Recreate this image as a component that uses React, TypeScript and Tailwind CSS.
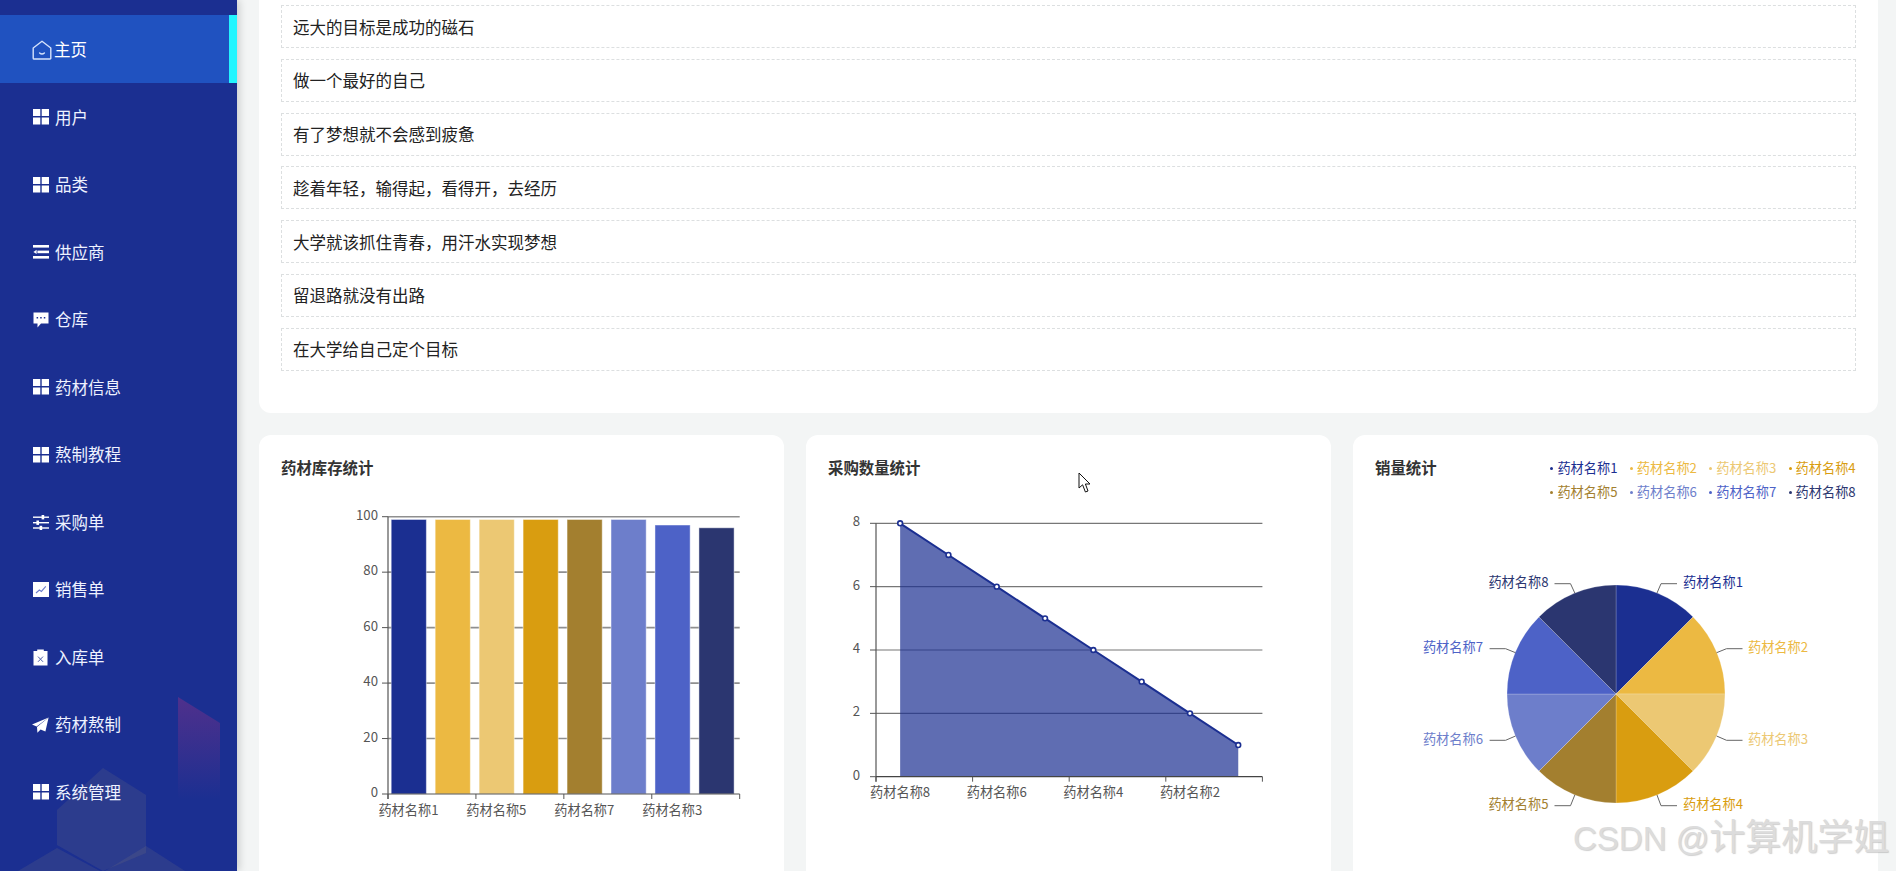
import React from 'react';

const FONT = '"Noto Sans CJK SC", "Noto Sans", sans-serif';
const COLORS = ['#1b2f91', '#ecb942', '#ecc873', '#d99d10', '#a37f2f', '#6d7ecb', '#4d62c7', '#2b3670'];

const quotes = [
  '远大的目标是成功的磁石',
  '做一个最好的自己',
  '有了梦想就不会感到疲惫',
  '趁着年轻，输得起，看得开，去经历',
  '大学就该抓住青春，用汗水实现梦想',
  '留退路就没有出路',
  '在大学给自己定个目标',
];

const GridIcon = () => (
  <svg width="16" height="16" viewBox="0 0 16 16" fill="#fff">
    <rect x="0" y="0" width="7.3" height="7" />
    <rect x="8.7" y="0" width="7.3" height="7" />
    <rect x="0" y="8.5" width="7.3" height="7" />
    <rect x="8.7" y="8.5" width="7.3" height="7" />
  </svg>
);

const HomeIcon = () => (
  <svg width="20" height="20" viewBox="0 0 20 20" fill="none" stroke="#d5e2fb" strokeWidth="1.4" className="-ml-[1px]">
    <path d="M1.2 8 L10 1.2 L18.8 8 V18.2 a0.8 0.8 0 0 1 -0.8 0.8 H2 a0.8 0.8 0 0 1 -0.8 -0.8 Z" strokeLinejoin="round" />
    <path d="M7.6 13 Q10 15 12.4 13" strokeLinecap="round" />
  </svg>
);

const ListIcon = () => (
  <svg width="16" height="14" viewBox="0 0 16 14" fill="#fff">
    <rect x="0" y="0" width="16" height="2.6" />
    <rect x="4.4" y="5.6" width="11.6" height="2.6" />
    <path d="M0.4 6.9 L3.6 4.8 V9 Z" />
    <rect x="0" y="11" width="16" height="2.6" />
  </svg>
);

const ChatIcon = () => (
  <svg width="16" height="16" viewBox="0 0 16 16">
    <path d="M0.5 0.5 H15.5 V11.5 H8 L4.5 15.5 V11.5 H0.5 Z" fill="#fff" />
    <rect x="3.6" y="5" width="1.5" height="1.5" fill="#1b2f91" />
    <rect x="7.2" y="5" width="1.5" height="1.5" fill="#1b2f91" />
    <rect x="10.8" y="5" width="1.5" height="1.5" fill="#1b2f91" />
  </svg>
);

const SlidersIcon = () => (
  <svg width="16" height="15" viewBox="0 0 16 15" fill="#fff">
    <rect x="0" y="1.5" width="16" height="1.4" />
    <rect x="0" y="7" width="16" height="1.4" />
    <rect x="0" y="12.3" width="16" height="1.4" />
    <rect x="8.6" y="0" width="2.6" height="4.4" />
    <rect x="3.4" y="5.5" width="2.6" height="4.4" />
    <rect x="6.6" y="10.8" width="2.6" height="4.4" />
  </svg>
);

const TrendIcon = () => (
  <svg width="16" height="15" viewBox="0 0 16 15">
    <rect x="0" y="0" width="16" height="15" fill="#fff" />
    <path d="M3 11 L6.4 8 L8.4 9.4 L12.8 4.4" fill="none" stroke="#6d7ecb" strokeWidth="1.1" />
  </svg>
);

const ClipboardIcon = () => (
  <svg width="15" height="17" viewBox="0 0 15 17">
    <path d="M0.5 2 H4.2 V0.5 H10.8 V2 H14.5 V16.5 H0.5 Z" fill="#fff" />
    <path d="M5 7.6 L10 12.8 M10 7.6 L5 12.8" stroke="#4d5fa8" strokeWidth="1" />
  </svg>
);

const PlaneIcon = () => (
  <svg width="17" height="16" viewBox="0 0 17 16" fill="#fff" className="-ml-[1px]">
    <path d="M16.6 0.4 L0 7.4 L4.6 9.4 Z" />
    <path d="M16.6 0.4 L5 10 L5.4 15.8 L8.6 12.6 L13.4 14.4 Z" />
  </svg>
);

const menu: { label: string; icon: React.ReactNode; active?: boolean }[] = [
  { label: '主页', icon: <HomeIcon />, active: true },
  { label: '用户', icon: <GridIcon /> },
  { label: '品类', icon: <GridIcon /> },
  { label: '供应商', icon: <ListIcon /> },
  { label: '仓库', icon: <ChatIcon /> },
  { label: '药材信息', icon: <GridIcon /> },
  { label: '熬制教程', icon: <GridIcon /> },
  { label: '采购单', icon: <SlidersIcon /> },
  { label: '销售单', icon: <TrendIcon /> },
  { label: '入库单', icon: <ClipboardIcon /> },
  { label: '药材熬制', icon: <PlaneIcon /> },
  { label: '系统管理', icon: <GridIcon /> },
];

const Sidebar = () => (
  <aside className="relative z-10 w-[237px] shrink-0 h-full bg-[#1b2f91] pt-[15px] overflow-hidden shadow-[2px_0_8px_rgba(0,0,0,0.18)]">
    {/* background decoration */}
    <svg className="absolute left-0 bottom-0 pointer-events-none" width="237" height="191" viewBox="0 680 237 191">
      <defs>
        <linearGradient id="purple" x1="0" y1="0" x2="0" y2="1">
          <stop offset="0" stopColor="#7a3188" stopOpacity="0.55" />
          <stop offset="1" stopColor="#7a3188" stopOpacity="0" />
        </linearGradient>
      </defs>
      <path d="M178 697 L220 723 V800 H178 Z" fill="url(#purple)" />
      <path d="M57 810 L103 768 L146 795 V853 L103 871 L57 845 Z" fill="#b0a070" fillOpacity="0.12" />
      <path d="M18 871 L57 848 L100 871 Z" fill="#b0a070" fillOpacity="0.12" />
      <path d="M105 871 L146 846 L185 871 Z" fill="#b0a070" fillOpacity="0.12" />
    </svg>
    {menu.map((m) => (
      <div
        key={m.label}
        className={`relative h-[67.5px] flex items-center pl-[33px] pt-[2px] text-[16.5px] ${m.active ? 'bg-[#2052c0] text-white' : 'text-[#eef2ff]'}`}
      >
        <span className="w-[22px] shrink-0 flex items-center">{m.icon}</span>
        <span className={m.active ? '-ml-[1px]' : ''}>{m.label}</span>
        {m.active && <span className="absolute right-0 top-0 bottom-0 w-[8px] bg-[#22f5ff]" />}
      </div>
    ))}
  </aside>
);

const axisText = 'text-[13.2px] fill-[#555]';

// bar chart, coordinates are page pixels through the viewBox
const BarChart = () => {
  const values = [99, 99, 99, 99, 99, 99, 97, 96];
  const x0 = 388;
  const x1 = 739.7;
  const y0 = 794;
  const yTop = 516.7;
  const ticks = [0, 20, 40, 60, 80, 100];
  const band = (x1 - x0) / 8;
  const labels = ['药材名称1', '药材名称5', '药材名称7', '药材名称3'];
  return (
    <svg viewBox="259 503 525 368" className="block w-[525px] h-[368px]">
      {ticks.map((t) => {
        const y = y0 - ((y0 - yTop) * t) / 100;
        return (
          <g key={t}>
            {t > 0 && <line x1={x0} x2={x1} y1={y} y2={y} stroke="#8f8f8f" strokeWidth="1.6" />}
            <line x1={x0 - 6} x2={x0} y1={y} y2={y} stroke="#555" />
            <text x={x0 - 10} y={y + 3} textAnchor="end" className={axisText}>{t}</text>
          </g>
        );
      })}
      <line x1={x0} x2={x0} y1={yTop} y2={y0 + 5} stroke="#555" strokeWidth="1.2" />
      {values.map((v, i) => {
        const top = y0 - ((y0 - yTop) * v) / 100;
        return (
          <rect
            key={i}
            x={x0 + band * i + 3.2}
            y={top}
            width={band * 0.8}
            height={y0 - top}
            fill={COLORS[i]}
            stroke="#ffffff"
            strokeOpacity="0.45"
            strokeWidth="1"
          />
        );
      })}
      <line x1={x0} x2={x1} y1={y0} y2={y0} stroke="#555" strokeWidth="1.2" />
      {[0, 2, 4, 6, 8].map((i) => (
        <line key={i} x1={x0 + band * i} x2={x0 + band * i} y1={y0} y2={y0 + 5} stroke="#555" />
      ))}
      {labels.map((l, i) => (
        <text key={l} x={x0 + band * (i * 2 + 0.5) - 1.5} y={815} textAnchor="middle" className={axisText}>{l}</text>
      ))}
    </svg>
  );
};

const AreaChart = () => {
  const values = [8, 7, 6, 5, 4, 3, 2, 1];
  const x0 = 876;
  const x1 = 1262.4;
  const y0 = 776.7;
  const yTop = 523.3;
  const band = (x1 - x0) / 8;
  const py = (v: number) => y0 - ((y0 - yTop) * v) / 8;
  const pts = values.map((v, i) => [x0 + band * (i + 0.5), py(v)]);
  const line = pts.map((p) => p.join(',')).join(' ');
  const labels = ['药材名称8', '药材名称6', '药材名称4', '药材名称2'];
  return (
    <svg viewBox="806 503 525 368" className="block w-[525px] h-[368px]">
      {[0, 2, 4, 6, 8].map((t) => (
        <g key={t}>
          {t > 0 && <line x1={x0} x2={x1} y1={py(t)} y2={py(t)} stroke="#777" strokeWidth="1.2" />}
          <line x1={x0 - 6} x2={x0} y1={py(t)} y2={py(t)} stroke="#555" />
          <text x={x0 - 16} y={py(t) + 3} textAnchor="end" className={axisText}>{t}</text>
        </g>
      ))}
      <line x1={x0} x2={x0} y1={yTop} y2={y0 + 5} stroke="#555" strokeWidth="1.2" />
      <polygon points={`${pts[0][0]},${y0} ${line} ${pts[7][0]},${y0}`} fill="#1b2f91" fillOpacity="0.7" />
      <line x1={x0} x2={x1} y1={y0} y2={y0} stroke="#444" strokeWidth="1.2" />
      {[0, 2, 4, 6, 8].map((i) => (
        <line key={i} x1={x0 + band * i} x2={x0 + band * i} y1={y0} y2={y0 + 5} stroke="#555" />
      ))}
      <polyline points={line} fill="none" stroke="#1b2f91" strokeWidth="2" />
      {pts.map((p, i) => (
        <circle key={i} cx={p[0]} cy={p[1]} r="2.4" fill="#fff" stroke="#1b2f91" strokeWidth="1.6" />
      ))}
      {labels.map((l, i) => (
        <text key={l} x={x0 + band * (i * 2 + 0.5)} y={797} textAnchor="middle" className={axisText}>{l}</text>
      ))}
    </svg>
  );
};

const PieChart = () => {
  const cx = 1616;
  const cy = 694;
  const r = 109;
  const point = (deg: number) => {
    const a = ((deg - 90) * Math.PI) / 180;
    return `${(cx + r * Math.cos(a)).toFixed(2)} ${(cy + r * Math.sin(a)).toFixed(2)}`;
  };
  const labels: { x: number; y: number; anchor: 'start' | 'end'; line: string }[] = [
    { x: 1683, y: 582, anchor: 'start', line: '1657,593 1661,583.7 1677,583.7' },
    { x: 1748, y: 647, anchor: 'start', line: '1716.6,652.7 1726.5,648.7 1742.5,648.7' },
    { x: 1748, y: 739, anchor: 'start', line: '1716.6,736 1726.5,740.3 1742.5,740.3' },
    { x: 1683, y: 804, anchor: 'start', line: '1657,795 1661,805.7 1677,805.7' },
    { x: 1548.5, y: 804, anchor: 'end', line: '1574.8,795 1570.5,805.7 1554.5,805.7' },
    { x: 1483, y: 739, anchor: 'end', line: '1515.5,736 1505.6,740.3 1489.6,740.3' },
    { x: 1483, y: 647, anchor: 'end', line: '1515.5,652.7 1505.6,648.7 1489.6,648.7' },
    { x: 1548.5, y: 582, anchor: 'end', line: '1574.8,593 1570.5,583.7 1554.5,583.7' },
  ];
  return (
    <svg viewBox="1353 503 525 368" className="block w-[525px] h-[368px]">
      {COLORS.map((c, i) => (
        <path
          key={c}
          d={`M${cx} ${cy} L${point(i * 45)} A${r} ${r} 0 0 1 ${point((i + 1) * 45)} Z`}
          fill={c}
          stroke="#ffffff"
          strokeOpacity="0.2"
          strokeWidth="1"
        />
      ))}
      {labels.map((l, i) => (
        <g key={i}>
          <polyline points={l.line} fill="none" stroke="#666" strokeWidth="1" />
          <text x={l.x} y={l.y + 4.5} textAnchor={l.anchor} fill={COLORS[i]} className="text-[13.2px]">
            {`药材名称${i + 1}`}
          </text>
        </g>
      ))}
    </svg>
  );
};

const ChartCard = ({ title, legend, children }: { title: string; legend?: boolean; children: React.ReactNode }) => (
  <div className="bg-white rounded-xl h-[480px]">
    <div className="h-[68px] px-[22px] pt-[20px] flex justify-between items-start">
      <span className="text-[15.4px] leading-[24px] font-bold text-[#333]">{title}</span>
      {legend && (
        <div className="grid grid-cols-[repeat(4,79.4px)] -mr-[12px] mt-[1px]">
          {COLORS.map((c, i) => (
            <div key={c} className="h-[24px] flex items-center text-[13.2px] whitespace-nowrap" style={{ color: c }}>
              <span className="w-[3px] h-[3px] rounded-full mr-[4px] shrink-0" style={{ background: c }} />
              {`药材名称${i + 1}`}
            </div>
          ))}
        </div>
      )}
    </div>
    {children}
  </div>
);

export default function App() {
  return (
    <div className="relative w-[1896px] h-[871px] overflow-hidden flex bg-[#f3f5f5]" style={{ fontFamily: FONT }}>
      <Sidebar />
      <main className="flex-1 pl-[22px] pr-[18px] min-w-0">
        <section className="bg-white rounded-b-xl h-[413px] px-[22px] pt-[5px] flex flex-col gap-[10.75px]">
          {quotes.map((q) => (
            <div key={q} className="h-[43px] shrink-0 border border-dashed border-[#dcdfe0] pl-[11px] pt-[1px] flex items-center text-[16.5px] text-[#222]">
              {q}
            </div>
          ))}
        </section>
        <section className="grid grid-cols-3 gap-[22px] mt-[22px]">
          <ChartCard title="药材库存统计"><BarChart /></ChartCard>
          <ChartCard title="采购数量统计"><AreaChart /></ChartCard>
          <ChartCard title="销量统计" legend><PieChart /></ChartCard>
        </section>
      </main>
      {/* mouse pointer in the capture */}
      <svg className="absolute left-[1078px] top-[472px]" width="14" height="22" viewBox="0 0 14 22">
        <path d="M1 1 V16 L4.6 12.8 L7.4 20 L10 19 L7.4 12 H12 Z" fill="#fff" stroke="#111" strokeWidth="1" />
      </svg>
      {/* watermark */}
      <div className="absolute left-[1573px] top-[815px] whitespace-nowrap text-[36px] leading-[46px] text-[#dcdcdc] [text-shadow:1px_1px_1px_rgba(120,120,120,0.35)]" style={{ fontFamily: '"Liberation Sans", "Noto Sans CJK SC", sans-serif' }}>
        <span className="text-[33px]">CSDN @</span>计算机学姐
      </div>
    </div>
  );
}
